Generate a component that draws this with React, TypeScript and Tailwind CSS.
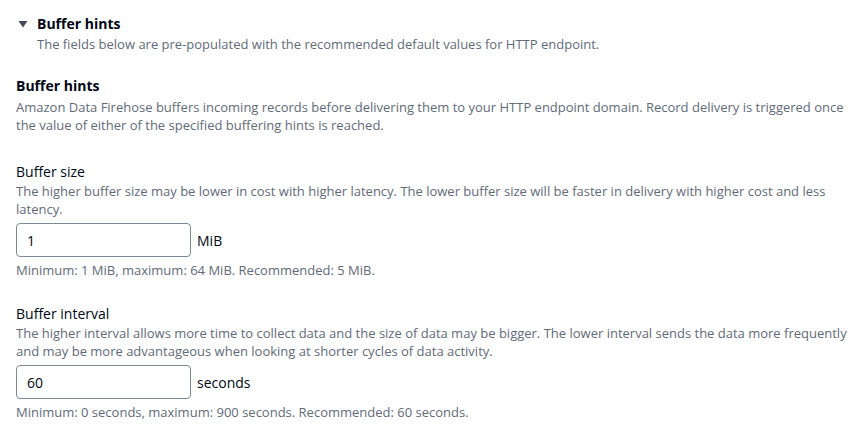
import React from 'react';

const font = { fontFamily: '"Open Sans", "Noto Sans", sans-serif' };

interface FieldProps {
  label: string;
  description: string;
  value: string;
  unit: string;
  constraint: string;
}

const Field: React.FC<FieldProps> = ({ label, description, value, unit, constraint }) => (
  <div className="flex flex-col">
    <div className="text-[14px] leading-[20px] text-[#000716]">{label}</div>
    <p className="text-[13px] leading-[18px] text-[#5f6b7a]">{description}</p>
    <div className="flex items-center gap-[6px] mt-[5px]">
      <div className="w-[175px] h-[34px] border border-[#7d8998] rounded-[4px] bg-white flex items-center px-[10px] text-[14px] text-[#000716]">
        {value}
      </div>
      <span className="text-[14px] text-[#000716]">{unit}</span>
    </div>
    <p className="text-[13px] leading-[18px] text-[#5f6b7a] mt-[4px]">{constraint}</p>
  </div>
);

export default function App() {
  return (
    <div className="w-[867px] h-[441px] bg-white overflow-hidden" style={font}>
      <div className="pl-[16px] pr-[7px] pt-[14px]">
        <div className="flex items-center">
          <svg className="w-[12px] h-[12px] ml-[1px] mr-[8px] text-[#414d5c]" viewBox="0 0 12 12">
            <path d="M1.5 3h9L6 9.5z" fill="currentColor" />
          </svg>
          <h3 className="text-[14px] leading-[20px] font-bold text-[#000716]">Buffer hints</h3>
        </div>
        <p className="ml-[21px] mt-[1px] text-[13px] leading-[18px] text-[#5f6b7a]">
          The fields below are pre-populated with the recommended default values for HTTP endpoint.
        </p>

        <div className="mt-[23px]">
          <h3 className="text-[14px] leading-[20px] font-bold text-[#000716]">Buffer hints</h3>
          <p className="mt-[2px] text-[13px] leading-[18px] text-[#5f6b7a]">
            Amazon Data Firehose buffers incoming records before delivering them to your HTTP endpoint domain. Record delivery is triggered once the value of either of the specified buffering hints is reached.
          </p>
        </div>

        <div className="mt-[28px]">
          <Field
            label="Buffer size"
            description="The higher buffer size may be lower in cost with higher latency. The lower buffer size will be faster in delivery with higher cost and less latency."
            value="1"
            unit="MiB"
            constraint="Minimum: 1 MiB, maximum: 64 MiB. Recommended: 5 MiB."
          />
        </div>

        <div className="mt-[25px]">
          <Field
            label="Buffer interval"
            description="The higher interval allows more time to collect data and the size of data may be bigger. The lower interval sends the data more frequently and may be more advantageous when looking at shorter cycles of data activity."
            value="60"
            unit="seconds"
            constraint="Minimum: 0 seconds, maximum: 900 seconds. Recommended: 60 seconds."
          />
        </div>
      </div>
    </div>
  );
}
